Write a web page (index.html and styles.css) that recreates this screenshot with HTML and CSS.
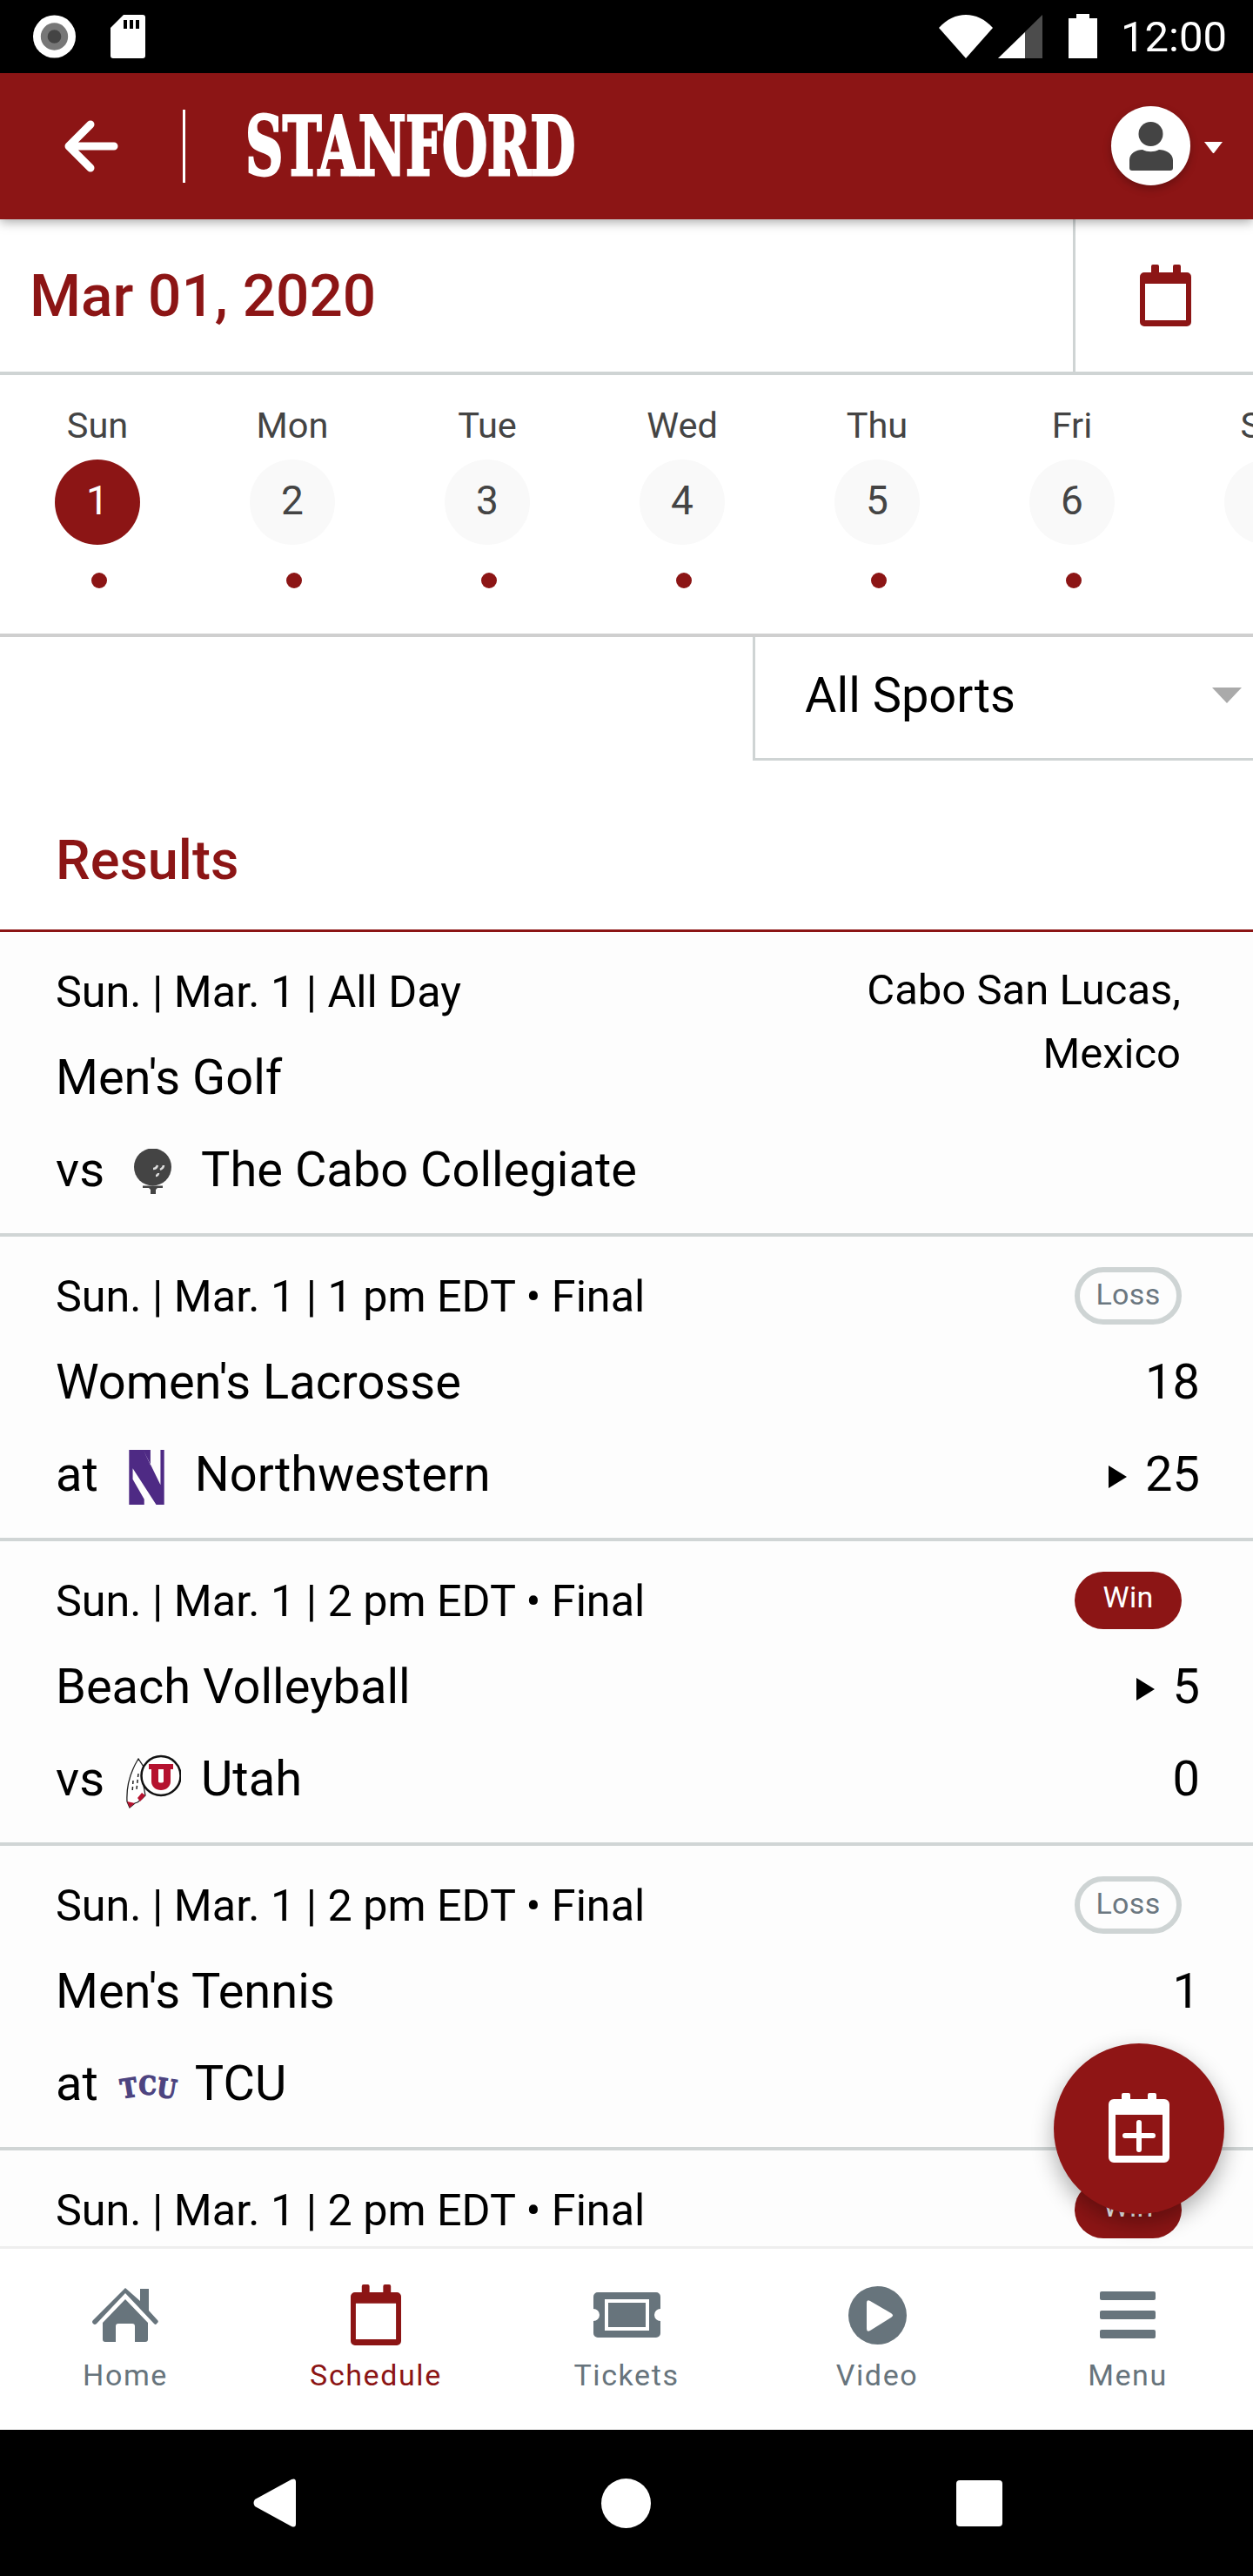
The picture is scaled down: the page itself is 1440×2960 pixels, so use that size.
FILE: index.html
```html
<!DOCTYPE html>
<html lang="en">
<head>
<meta charset="utf-8">
<title>Stanford Schedule</title>
<link rel="stylesheet" href="styles.css">
</head>
<body>
<div class="phone">
  <div class="status">
    <div class="status-left">
      <svg class="ico-rec" viewBox="0 0 50 50"><circle cx="25" cy="25" r="25" fill="#fff"/><circle cx="25" cy="25" r="16" fill="#777"/><circle cx="25" cy="25" r="8" fill="#444"/></svg>
      <svg class="ico-sd" viewBox="0 0 40 50"><path d="M15 0H37a3 3 0 0 1 3 3V47a3 3 0 0 1-3 3H3a3 3 0 0 1-3-3V15z" fill="#fff"/><path d="M15 6h4v10h-4zM22 6h4v10h-4zM29 6h4v10h-4z" fill="#000"/></svg>
    </div>
    <div class="status-right">
      <svg class="ico-wifi" viewBox="0 0 62 50"><path d="M0 15C18-5 44-5 62 15L31 50z" fill="#fff"/></svg>
      <svg class="ico-signal" viewBox="0 0 51 50"><path d="M0 50L51 0V50z" fill="#4c4c4c"/><path d="M0 50L31 20V50z" fill="#fff"/></svg>
      <svg class="ico-batt" viewBox="0 0 33 51"><path d="M9 0H24V5H33V51H0V5H9z" fill="#fff"/></svg>
      <span class="clock">12:00</span>
    </div>
  </div>

  <header class="topbar">
    <svg class="ico-back" viewBox="0 0 63 60"><path d="M31 5L6 30L31 55M6 30H58" fill="none" stroke="#fff" stroke-width="9" stroke-linecap="round" stroke-linejoin="round"/></svg>
    <span class="top-div"></span>
    <span class="logo">STANFORD</span>
    <span class="avatar">
      <svg viewBox="0 0 91 91"><circle cx="45.500" cy="32" r="14" fill="#444"/><path d="M21 71V62C21 54 29 50 36 50C42 53 49 53 55 50C62 50 71 54 71 62V71C71 73 70 74 68 74H24C22 74 21 73 21 71z" fill="#444"/></svg>
    </span>
    <svg class="ico-caret" viewBox="0 0 23 13"><path d="M1 0H22L12 13H11z" fill="#fff"/></svg>
  </header>

  <div class="datebar">
    <div class="date-text">Mar 01, 2020</div>
    <div class="date-btn">
      <svg class="ico-cal" viewBox="0 0 59 71"><path d="M13 9V2a2 2 0 0 1 2-2h5a2 2 0 0 1 2 2V9H38V2a2 2 0 0 1 2-2h5a2 2 0 0 1 2 2V9h7a5 5 0 0 1 5 5V66a5 5 0 0 1-5 5H5a5 5 0 0 1-5-5V14a5 5 0 0 1 5-5zM6 22V64H53V22z" fill="#8c1515" fill-rule="evenodd"/></svg>
    </div>
  </div>

  <div class="week">
    <div class="day"><span class="dn">Sun</span><span class="dc on">1</span><span class="dot"></span></div>
    <div class="day"><span class="dn">Mon</span><span class="dc">2</span><span class="dot"></span></div>
    <div class="day"><span class="dn">Tue</span><span class="dc">3</span><span class="dot"></span></div>
    <div class="day"><span class="dn">Wed</span><span class="dc">4</span><span class="dot"></span></div>
    <div class="day"><span class="dn">Thu</span><span class="dc">5</span><span class="dot"></span></div>
    <div class="day"><span class="dn">Fri</span><span class="dc">6</span><span class="dot"></span></div>
    <div class="day"><span class="dn">Sat</span><span class="dc">7</span></div>
  </div>

  <div class="filter-row">
    <div class="filter"><span>All Sports</span><i class="filter-tri"></i></div>
  </div>

  <div class="content">
    <h2 class="results">Results</h2>

    <article class="row">
      <div class="l1"><span>Sun. | Mar. 1 | All Day</span></div>
      <div class="place">Cabo San Lucas,<br>Mexico</div>
      <div class="l2"><span>Men's Golf</span></div>
      <div class="l3">
        <span class="vs">vs</span>
        <span class="logo-slot">
          <svg class="lg-golf" viewBox="0 0 43 52"><circle cx="21.500" cy="21" r="21.500" fill="#444"/><path d="M10 42.500H33V45H27L25 47V52H19V47L17 45H10z" fill="#444"/><path d="M22 23c2 0 4-1 5-4M30 24c2-1 4-3 4-5M25 31c2 0 3-2 3-3" stroke="#ddd" stroke-width="2.500" fill="none"/></svg>
        </span>
        <span>The Cabo Collegiate</span>
      </div>
    </article>

    <article class="row">
      <div class="l1"><span>Sun. | Mar. 1 | 1 pm EDT • Final</span><span class="pill loss">Loss</span></div>
      <div class="l2"><span>Women's Lacrosse</span><span class="score">18</span></div>
      <div class="l3">
        <span class="vs">at</span>
        <span class="logo-slot">
          <svg class="lg-nw" viewBox="0 0 41 64"><path d="M0 0H41V64H0zM16.700 0L36.700 41V0H25V17.700zM4.300 21.700V34.300L17.700 57.700V64H31.700z" fill="#4e2a84" fill-rule="evenodd"/></svg>
        </span>
        <span>Northwestern</span>
        <span class="score"><i class="tri"></i>25</span>
      </div>
    </article>

    <article class="row">
      <div class="l1"><span>Sun. | Mar. 1 | 2 pm EDT • Final</span><span class="pill win">Win</span></div>
      <div class="l2"><span>Beach Volleyball</span><span class="score"><i class="tri"></i>5</span></div>
      <div class="l3">
        <span class="vs">vs</span>
        <span class="logo-slot">
          <svg class="lg-utah" viewBox="0 0 64 62"><path d="M15 5C7 18 1 35 2 54L5 61L11 56L14 55L19 51L23 47L20 30L21 14z" fill="#fff" stroke="#222" stroke-width="1.300"/><path d="M2 54L5 61L11 56zM14 50L17 54L23 47L19 44z" fill="#b5122f"/><path d="M9 30L8 44M15 22L13 40" stroke="#222" stroke-width="1.500" stroke-dasharray="4 3"/><circle cx="41" cy="24.500" r="22.500" fill="#fff" stroke="#111" stroke-width="2.500"/><path d="M27 11H55V17H52V31C52 37 47 41 41 41C35 41 30 37 30 31V17H27zM38 17V31C38 33 44 33 44 31V17z" fill="#b5122f" fill-rule="evenodd"/></svg>
        </span>
        <span>Utah</span>
        <span class="score">0</span>
      </div>
    </article>

    <article class="row">
      <div class="l1"><span>Sun. | Mar. 1 | 2 pm EDT • Final</span><span class="pill loss">Loss</span></div>
      <div class="l2"><span>Men's Tennis</span><span class="score">1</span></div>
      <div class="l3">
        <span class="vs">at</span>
        <span class="logo-slot"><span class="lg-tcu"><i class="tc-t">T</i><i class="tc-c">C</i><i class="tc-u">U</i></span></span>
        <span>TCU</span>
      </div>
    </article>

    <article class="row">
      <div class="l1"><span>Sun. | Mar. 1 | 2 pm EDT • Final</span><span class="pill win">Win</span></div>
    </article>

    <button class="fab" aria-label="Add to calendar">
      <svg viewBox="0 0 70 80"><path d="M15 7V2a2 2 0 0 1 2-2h6a2 2 0 0 1 2 2V7H45V2a2 2 0 0 1 2-2h6a2 2 0 0 1 2 2V7h9a6 6 0 0 1 6 6V74a6 6 0 0 1-6 6H6a6 6 0 0 1-6-6V13a6 6 0 0 1 6-6zM8 25V72H62V25z" fill="#fff" fill-rule="evenodd"/><path d="M32 34a3 3 0 0 1 6 0V46H51a3 3 0 0 1 0 6H38V65a3 3 0 0 1-6 0V52H19a3 3 0 0 1 0-6H32z" fill="#fff"/></svg>
    </button>
  </div>

  <nav class="tabs">
    <div class="tab">
      <span class="tab-ico"><svg class="t-home" viewBox="0 0 76 62"><path d="M38 0L55 15V1H65V26L75 37Q77 39 74 41Q73 43 71 41L38 6L5 41Q3 43 1 41Q-1 39 1 37z" fill="#67747c"/><path d="M38 13L64 40V59a3 3 0 0 1-3 3H49V44a3 3 0 0 0-3-3H30a3 3 0 0 0-3 3V62H15a3 3 0 0 1-3-3V40z" fill="#67747c"/></svg></span>
      <span class="tab-lb">Home</span>
    </div>
    <div class="tab active">
      <span class="tab-ico"><svg class="t-cal" viewBox="0 0 59 71"><path d="M13 9V2a2 2 0 0 1 2-2h5a2 2 0 0 1 2 2V9H38V2a2 2 0 0 1 2-2h5a2 2 0 0 1 2 2V9h7a5 5 0 0 1 5 5V66a5 5 0 0 1-5 5H5a5 5 0 0 1-5-5V14a5 5 0 0 1 5-5zM6 22V64H53V22z" fill="#8c1515" fill-rule="evenodd"/></svg></span>
      <span class="tab-lb">Schedule</span>
    </div>
    <div class="tab">
      <span class="tab-ico"><svg class="t-tick" viewBox="0 0 77 52"><path d="M5 0H72a5 5 0 0 1 5 5V19a7 7 0 0 0 0 14V47a5 5 0 0 1-5 5H5a5 5 0 0 1-5-5V33a7 7 0 0 0 0-14V5a5 5 0 0 1 5-5zM13 8V44H64V8z" fill="#67747c" fill-rule="evenodd"/><path d="M17 12H60V40H17z" fill="#67747c"/></svg></span>
      <span class="tab-lb">Tickets</span>
    </div>
    <div class="tab">
      <span class="tab-ico"><svg class="t-vid" viewBox="0 0 67 67"><circle cx="33.500" cy="33.500" r="33.500" fill="#67747c"/><path d="M21 19Q21 15 25 17L49 31Q53 33.500 49 36L25 51Q21 53 21 49z" fill="#fff"/></svg></span>
      <span class="tab-lb">Video</span>
    </div>
    <div class="tab">
      <span class="tab-ico"><span class="t-menu"><i></i><i></i><i></i></span></span>
      <span class="tab-lb">Menu</span>
    </div>
  </nav>

  <div class="android">
    <svg class="a-back" viewBox="0 0 49 56"><path d="M2 24L44 1Q49-1 49 4V52Q49 57 44 55L2 32Q-1 28 2 24z" fill="#fff"/></svg>
    <span class="a-home"></span>
    <span class="a-rec"></span>
  </div>
</div>
</body>
</html>
```
FILE: styles.css
```css
* { box-sizing: border-box; }
html, body { margin: 0; padding: 0; }
body { width: 1440px; height: 2960px; overflow: hidden; background: #fff; font-family: Roboto, "Liberation Sans", sans-serif; color: #000; }
.phone { width: 1440px; height: 2960px; display: flex; flex-direction: column; }

.status { height: 84px; flex: none; background: #000; display: flex; justify-content: space-between; align-items: flex-start; padding: 17px 30px 0 38px; }
.status-left, .status-right { display: flex; align-items: flex-start; }
.ico-rec { width: 49px; height: 50px; }
.ico-sd { width: 40px; height: 50px; margin-left: 40px; }
.ico-wifi { width: 62px; height: 50px; }
.ico-signal { width: 51px; height: 50px; margin-left: 6px; }
.ico-batt { width: 33px; height: 51px; margin-left: 30px; margin-top: -1px; }
.clock { color: #fff; font-size: 49px; line-height: 54px; margin-left: 27px; margin-top: -1px; }

.topbar { height: 168px; flex: none; background: #8c1515; display: flex; align-items: center; position: relative; z-index: 2; box-shadow: 0 3px 12px rgba(0,0,0,.35); padding-left: 73px; }
.ico-back { width: 63px; height: 60px; }
.top-div { width: 3px; height: 84px; background: #fff; margin-left: 74px; }
.logo { font-family: "DejaVu Serif", serif; font-weight: 700; color: #fff; font-size: 94px; line-height: 70px; height: 70px; margin-left: 69px; letter-spacing: -1px; transform: scaleX(.64); transform-origin: left center; white-space: nowrap; -webkit-text-stroke: 3px #fff; }
.avatar { position: absolute; left: 1277px; top: 38px; width: 91px; height: 91px; border-radius: 50%; background: #fff; box-shadow: 0 4px 10px rgba(0,0,0,.25); }
.avatar svg { width: 91px; height: 91px; display: block; }
.ico-caret { position: absolute; left: 1383px; top: 79px; width: 23px; height: 13px; }

.datebar { height: 179px; flex: none; display: flex; border-bottom: 4px solid #cfd4d4; background: #fff; }
.date-text { flex: 1; color: #8c1515; font-weight: 500; font-size: 67.500px; line-height: 175px; padding-left: 34px; }
.date-btn { width: 207px; flex: none; border-left: 3px solid #cfd4d4; display: flex; align-items: center; justify-content: center; padding-left: 3px; }
.ico-cal { width: 59px; height: 71px; }

.week { height: 301px; flex: none; display: flex; border-bottom: 4px solid #cfcfcf; overflow: hidden; background: #fff; }
.day { flex: 0 0 224px; display: flex; flex-direction: column; align-items: center; color: #444; }
.dn { font-size: 41.500px; line-height: 48px; margin-top: 34px; }
.dc { width: 98px; height: 98px; border-radius: 50%; background: #f9f9f9; font-size: 46px; line-height: 94px; text-align: center; margin-top: 15px; }
.dc.on { background: #8c1515; color: #fff; }
.dot { width: 18px; height: 18px; border-radius: 50%; background: #8c1515; margin-top: 32px; margin-left: 4px; }

.filter-row { height: 142px; flex: none; display: flex; justify-content: flex-end; background: #fff; }
.filter { width: 575px; height: 142px; border-left: 3px solid #cfd4d4; border-bottom: 3px solid #cfd4d4; display: flex; align-items: center; justify-content: space-between; padding-left: 57px; padding-right: 13px; padding-bottom: 5px; font-size: 56px; }
.filter-tri { width: 0; height: 0; border-left: 17px solid transparent; border-right: 17px solid transparent; border-top: 18px solid #aaa; }

.content { flex: 1; min-height: 0; overflow: hidden; position: relative; background: #fdfdfd; }
.results { margin: 0; height: 197px; background: #fff; border-bottom: 3px solid #8c1515; color: #8c1515; font-size: 63px; font-weight: 500; line-height: 60px; padding: 85px 0 0 64px; }
.row { height: 350px; border-bottom: 4px solid #d0d5d5; padding: 0 61px 0 64px; position: relative; background: #fdfdfd; }
.l1 { height: 60px; position: relative; top: 39px; font-size: 50.300px; line-height: 60px; display: flex; justify-content: space-between; align-items: center; }
.l2 { position: absolute; left: 64px; right: 61px; top: 131px; height: 72px; line-height: 72px; font-size: 56px; display: flex; justify-content: space-between; }
.l3 { position: absolute; left: 64px; right: 61px; top: 237px; height: 72px; line-height: 72px; font-size: 56px; display: flex; }
.place { position: absolute; right: 83px; top: 30px; text-align: right; font-size: 49px; line-height: 73px; }
.logo-slot { width: 111px; flex: none; display: flex; align-items: center; justify-content: center; }
.score { margin-left: auto; display: flex; align-items: center; }
.tri { width: 0; height: 0; border-top: 13px solid transparent; border-bottom: 13px solid transparent; border-left: 21px solid #000; margin-right: 21px; margin-top: 6px; }
.pill { width: 123px; height: 66px; border-radius: 33px; font-size: 34px; line-height: 50px; text-align: center; margin-right: 21px; margin-bottom: 2px; letter-spacing: .3px; }
.pill.loss { border: 6px solid #ced4d4; color: #6b7780; background: #fdfdfd; }
.pill.win { background: #8c1515; color: #fff; line-height: 58px; }
.lg-golf { width: 43px; height: 52px; margin-top: 4px; }
.lg-nw { width: 41px; height: 63px; margin-top: 6px; }
.lg-utah { width: 64px; height: 62px; margin-top: 6px; }
.lg-tcu { font-family: "DejaVu Serif", serif; font-weight: 700; font-size: 30px; line-height: 34px; color: #4d4480; -webkit-text-stroke: 1.500px #4d4480; display: flex; margin-top: 8px; }
.lg-tcu i { font-style: normal; display: block; width: 21px; text-align: center; transform-origin: center; }
.tc-t { transform: translateY(2px) rotate(-9deg) scaleX(.85); }
.tc-c { transform: translateY(-1px) scaleX(.85); }
.tc-u { transform: translateY(2px) rotate(9deg) scaleX(.85); }

.fab { position: absolute; left: 1211px; top: 1474px; width: 196px; height: 196px; border-radius: 50%; border: 0; padding: 0; background: #8f1515; box-shadow: 0 10px 26px rgba(0,0,0,.32); display: flex; align-items: center; justify-content: center; }
.fab svg { width: 70px; height: 80px; margin-top: -2px; }

.tabs { height: 211px; flex: none; display: flex; background: #fff; border-top: 3px solid #eee; }
.tab { flex: 1; display: flex; flex-direction: column; align-items: center; color: #67747c; }
.tab.active { color: #8c1515; }
.tab-ico { height: 96px; margin-top: 28px; display: flex; align-items: center; justify-content: center; }
.tab-lb { font-size: 34px; line-height: 40px; letter-spacing: 1.600px; margin-top: 1px; }
.t-home { width: 76px; height: 62px; }
.t-cal { width: 58px; height: 70px; }
.t-tick { width: 77px; height: 52px; }
.t-vid { width: 67px; height: 67px; }
.t-menu { width: 64px; display: flex; flex-direction: column; gap: 12px; }
.t-menu i { height: 10px; background: #67747c; border-radius: 2px; display: block; }

.android { height: 168px; flex: none; background: #000; display: flex; align-items: center; padding-left: 291px; }
.a-back { width: 49px; height: 56px; }
.a-home { width: 57px; height: 57px; border-radius: 50%; background: #fff; margin-left: 351px; }
.a-rec { width: 53px; height: 53px; border-radius: 4px; background: #fff; margin-left: 351px; }
```
